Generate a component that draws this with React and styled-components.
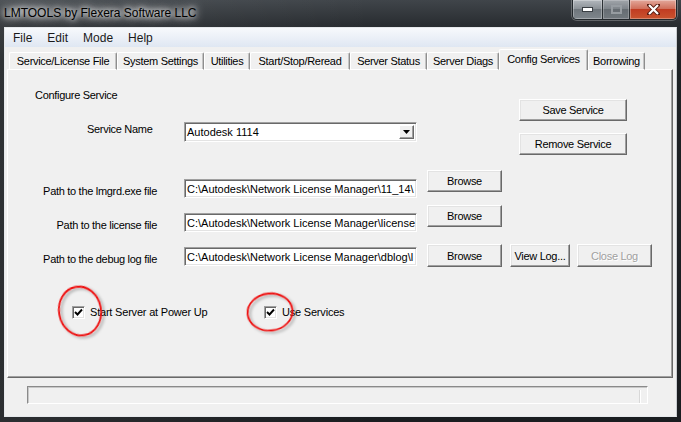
import React from "react";
import styled, { createGlobalStyle } from "styled-components";

const GlobalStyle = createGlobalStyle`
  html, body {
    margin: 0;
    padding: 0;
    background: #1d2124;
  }
  * {
    box-sizing: border-box;
  }
`;

const uiFont = `"Liberation Sans", Arial, sans-serif`;

const Window = styled.div`
  width: 681px;
  height: 422px;
  display: flex;
  flex-direction: column;
  padding: 0 4px 5px 4px;
  overflow: hidden;
  font-family: ${uiFont};
  background: linear-gradient(90deg, rgba(255, 255, 255, 0.08), rgba(255, 255, 255, 0) 55%),
    linear-gradient(180deg, #40454a 0px, #2a2e32 24px, #1e2225 60px, #1a1d20 100%);
`;

const TitleBar = styled.div`
  height: 27px;
  display: flex;
  justify-content: space-between;
  align-items: flex-start;
`;

const Title = styled.div`
  padding-top: 6px;
  font-size: 12px;
  color: #000;
  text-shadow: 0 0 5px #fff, 0 0 8px #fff, 0 0 12px rgba(255, 255, 255, 0.9);
`;

const Controls = styled.div`
  display: flex;
  height: 20px;
  border: 1px solid #23282c;
  border-top: none;
  border-radius: 0 0 5px 5px;
  overflow: hidden;
  box-shadow: 0 0 0 1px rgba(255, 255, 255, 0.25);
`;

const CaptionButton = styled.div`
  width: ${(p) => p.$w}px;
  display: flex;
  align-items: center;
  justify-content: center;
  border-left: ${(p) => (p.$first ? "none" : "1px solid #2a2f33")};
  box-shadow: inset 0 0 0 1px rgba(255, 255, 255, 0.3);
  background: ${(p) =>
    p.$close
      ? "linear-gradient(180deg, #e3a89b 0%, #d0705c 45%, #c13c22 50%, #c9542f 100%)"
      : "linear-gradient(180deg, #b3b8bd 0%, #8c9298 45%, #6f767c 50%, #7f868c 100%)"};
  opacity: ${(p) => (p.$disabled ? 0.85 : 1)};
`;

const Client = styled.div`
  flex: 1;
  display: flex;
  flex-direction: column;
  background: #f0f0f0;
  border: 1px solid #e6e9ec;
  border-right-color: #c9ccd0;
`;

const MenuBar = styled.div`
  height: 19px;
  display: flex;
  align-items: center;
  gap: 15px;
  padding-left: 8px;
  background: linear-gradient(180deg, #f7f9fc 0%, #e9eef6 60%, #dfe7f2 100%);
  font-size: 12px;
  color: #1a1a1a;
`;

const MenuItem = styled.span``;

const TabStrip = styled.div`
  height: 23px;
  display: flex;
  align-items: flex-end;
  padding-left: 4px;
  position: relative;
  z-index: 1;
  margin-bottom: -1px;
`;

const Tab = styled.div`
  width: ${(p) => p.$w}px;
  height: ${(p) => (p.$active ? 21 : 18)}px;
  display: flex;
  align-items: center;
  justify-content: center;
  padding-bottom: ${(p) => (p.$active ? 3 : 1)}px;
  font-size: 11px;
  letter-spacing: -0.3px;
  color: #000;
  background: #f0f0f0;
  border: 1px solid #fff;
  border-bottom: ${(p) => (p.$active ? "none" : "1px solid #fff")};
  border-right: 1px solid #8e8e8e;
  border-radius: 2px 2px 0 0;
  box-shadow: inset -1px 0 0 #c4c4c4;
  white-space: nowrap;
`;

const Panel = styled.div`
  margin-left: 2px;
  width: 666px;
  height: 309px;
  border: 1px solid;
  border-color: #fff #696969 #696969 #fff;
  box-shadow: inset -1px -1px 0 #a0a0a0;
  font-size: 11px;
  letter-spacing: -0.3px;
  color: #000;
`;

const TopSection = styled.div`
  display: flex;
`;

const LeftCol = styled.div`
  width: 511px;
`;

const Heading = styled.div`
  padding: 19px 0 0 27px;
  line-height: 13px;
`;

const ServiceRow = styled.div`
  display: flex;
  align-items: flex-start;
  margin-top: 20px;
  padding-left: 79px;
`;

const ServiceLabel = styled.div`
  width: 97px;
  padding-top: 1px;
  line-height: 13px;
`;

const RightCol = styled.div`
  display: flex;
  flex-direction: column;
  gap: 12px;
  padding-top: 29px;
`;

const Button = styled.div`
  width: ${(p) => p.$w}px;
  height: ${(p) => p.$h || 22}px;
  margin-left: ${(p) => p.$ml || 0}px;
  display: flex;
  align-items: center;
  justify-content: center;
  flex-shrink: 0;
  background: #f0f0f0;
  border: 1px solid;
  border-color: #fff #696969 #696969 #fff;
  box-shadow: inset -1px -1px 0 #a0a0a0, inset 1px 1px 0 #e3e3e3;
  font-size: 11px;
  letter-spacing: -0.3px;
  color: ${(p) => (p.$disabled ? "#a0a0a0" : "#000")};
  text-shadow: ${(p) => (p.$disabled ? "1px 1px 0 #fff" : "none")};
`;

const Field = styled.div`
  position: relative;
  width: 233px;
  height: ${(p) => p.$h || 19}px;
  flex-shrink: 0;
  display: flex;
  align-items: center;
  padding-left: 2px;
  background: #fff;
  border: 1px solid;
  border-color: #a0a0a0 #fff #fff #a0a0a0;
  box-shadow: inset 1px 1px 0 #696969, inset -1px -1px 0 #e3e3e3;
  overflow: hidden;
  white-space: nowrap;
  font-size: 11px;
  letter-spacing: 0;
`;

const DropButton = styled.div`
  position: absolute;
  right: 2px;
  top: 2px;
  width: 15px;
  height: 14px;
  display: flex;
  align-items: center;
  justify-content: center;
  background: #f0f0f0;
  border: 1px solid;
  border-color: #fff #696969 #696969 #fff;
  box-shadow: inset -1px -1px 0 #a0a0a0;
`;

const PathRow = styled.div`
  display: flex;
  align-items: flex-start;
  margin-top: ${(p) => p.$mt}px;
`;

const FieldGroup = styled.div`
  display: flex;
  align-items: flex-start;
  margin-top: ${(p) => p.$mt}px;
`;

const PathLabel = styled.div`
  width: 149px;
  margin-right: 27px;
  padding-top: 6px;
  line-height: 13px;
  text-align: right;
  white-space: nowrap;
`;

const CheckRow = styled.div`
  display: grid;
  grid-template-columns: 192px auto;
  margin-top: 39px;
  padding-left: 64px;
`;

const CheckItem = styled.div`
  position: relative;
  display: flex;
  align-items: center;
  height: 13px;
`;

const Box = styled.div`
  width: 13px;
  height: 13px;
  background: #fff;
  border: 1px solid;
  border-color: #a0a0a0 #fff #fff #a0a0a0;
  box-shadow: inset 1px 1px 0 #696969, inset -1px -1px 0 #e3e3e3;
  display: flex;
  align-items: center;
  justify-content: center;
`;

const CheckLabel = styled.span`
  margin-left: 5px;
  line-height: 13px;
  letter-spacing: -0.2px;
`;

const Circle = styled.svg`
  position: absolute;
  left: ${(p) => p.$left}px;
  top: ${(p) => p.$top}px;
  overflow: visible;
  pointer-events: none;
`;

const StatusBox = styled.div`
  margin: 8px 0 0 22px;
  width: 621px;
  height: 18px;
  position: relative;
  border: 1px solid;
  border-color: #8a8a8a #fff #fff #8a8a8a;
  box-shadow: inset 1px 1px 0 #c8c8c8;
  &::after {
    content: "";
    position: absolute;
    right: 6px;
    top: 3px;
    bottom: 0;
    width: 1px;
    background: #fff;
    box-shadow: -1px 0 0 #d8d8d8;
  }
`;

const Check = () => (
  <svg width="9" height="9" viewBox="0 0 9 9">
    <polyline points="1,4 3.5,6.5 8,1.5" fill="none" stroke="#000" strokeWidth="1.9" />
  </svg>
);

const RedCircle = ({ id, left, top, w, h, rx, ry, rot }) => (
  <Circle $left={left} $top={top} width={w} height={h}>
    <defs>
      <filter id={id} x="-30%" y="-30%" width="160%" height="160%">
        <feDropShadow dx="2" dy="2" stdDeviation="1.4" floodColor="#000" floodOpacity="0.35" />
      </filter>
    </defs>
    <ellipse
      cx={w / 2}
      cy={h / 2}
      rx={rx}
      ry={ry}
      fill="none"
      stroke="#ee1111"
      strokeWidth="1.8"
      filter={`url(#${id})`}
      transform={`rotate(${rot} ${w / 2} ${h / 2})`}
    />
  </Circle>
);

const tabs = [
  { label: "Service/License File", w: 108 },
  { label: "System Settings", w: 87 },
  { label: "Utilities", w: 46 },
  { label: "Start/Stop/Reread", w: 100 },
  { label: "Server Status", w: 77 },
  { label: "Server Diags", w: 72 },
  { label: "Config Services", w: 89, active: true },
  { label: "Borrowing", w: 57 },
];

const paths = [
  {
    label: "Path to the lmgrd.exe file",
    value: "C:\\Autodesk\\Network License Manager\\11_14\\",
    mt: 15,
    fieldTop: 9,
  },
  {
    label: "Path to the license file",
    value: "C:\\Autodesk\\Network License Manager\\license",
    mt: 7,
    fieldTop: 8,
  },
  {
    label: "Path to the debug log file",
    value: "C:\\Autodesk\\Network License Manager\\dblog\\l",
    mt: 12,
    fieldTop: 3,
    logs: true,
  },
];

export default function App() {
  return (
    <>
      <GlobalStyle />
      <Window>
        <TitleBar>
          <Title>LMTOOLS by Flexera Software LLC</Title>
          <Controls>
            <CaptionButton $w={29} $first>
              <svg width="11" height="5" viewBox="0 0 11 5">
                <rect x="0.5" y="0.5" width="10" height="4" fill="#fff" stroke="#3a3f44" />
              </svg>
            </CaptionButton>
            <CaptionButton $w={27} $disabled>
              <svg width="11" height="9" viewBox="0 0 11 9">
                <rect x="1" y="1" width="9" height="7" fill="none" stroke="#a9aeb3" strokeWidth="2" />
              </svg>
            </CaptionButton>
            <CaptionButton $w={47} $close>
              <svg width="13" height="11" viewBox="0 0 13 11">
                <path
                  d="M2 1 L11 10 M11 1 L2 10"
                  stroke="#5a1d12"
                  strokeWidth="4"
                  strokeLinecap="square"
                />
                <path d="M2 1 L11 10 M11 1 L2 10" stroke="#fff" strokeWidth="2.2" />
              </svg>
            </CaptionButton>
          </Controls>
        </TitleBar>

        <Client>
          <MenuBar>
            <MenuItem>File</MenuItem>
            <MenuItem>Edit</MenuItem>
            <MenuItem>Mode</MenuItem>
            <MenuItem>Help</MenuItem>
          </MenuBar>

          <TabStrip>
            {tabs.map((t) => (
              <Tab key={t.label} $w={t.w} $active={t.active}>
                {t.label}
              </Tab>
            ))}
          </TabStrip>

          <Panel>
            <TopSection>
              <LeftCol>
                <Heading>Configure Service</Heading>
                <ServiceRow>
                  <ServiceLabel>Service Name</ServiceLabel>
                  <Field $h={20}>
                    Autodesk 1114
                    <DropButton>
                      <svg width="7" height="4" viewBox="0 0 7 4">
                        <polygon points="0,0 7,0 3.5,4" fill="#000" />
                      </svg>
                    </DropButton>
                  </Field>
                </ServiceRow>
              </LeftCol>
              <RightCol>
                <Button $w={108}>Save Service</Button>
                <Button $w={108}>Remove Service</Button>
              </RightCol>
            </TopSection>

            {paths.map((p) => (
              <PathRow key={p.label} $mt={p.mt}>
                <FieldGroup $mt={p.fieldTop}>
                  <PathLabel>{p.label}</PathLabel>
                  <Field>{p.value}</Field>
                </FieldGroup>
                <Button $w={75} $h={p.logs ? 23 : 22} $ml={10}>
                  Browse
                </Button>
                {p.logs && (
                  <>
                    <Button $w={60} $h={23} $ml={8}>
                      View Log...
                    </Button>
                    <Button $w={75} $h={23} $ml={7} $disabled>
                      Close Log
                    </Button>
                  </>
                )}
              </PathRow>
            ))}

            <CheckRow>
              <CheckItem>
                <Box>
                  <Check />
                </Box>
                <CheckLabel>Start Server at Power Up</CheckLabel>
                <RedCircle id="c1" left={-20} top={-25} w={56} h={60} rx={21} ry={24.5} rot={-10} />
              </CheckItem>
              <CheckItem>
                <Box>
                  <Check />
                </Box>
                <CheckLabel>Use Services</CheckLabel>
                <RedCircle id="c2" left={-22} top={-19} w={56} h={50} rx={22.5} ry={18.5} rot={-6} />
              </CheckItem>
            </CheckRow>
          </Panel>

          <StatusBox />
        </Client>
      </Window>
    </>
  );
}
